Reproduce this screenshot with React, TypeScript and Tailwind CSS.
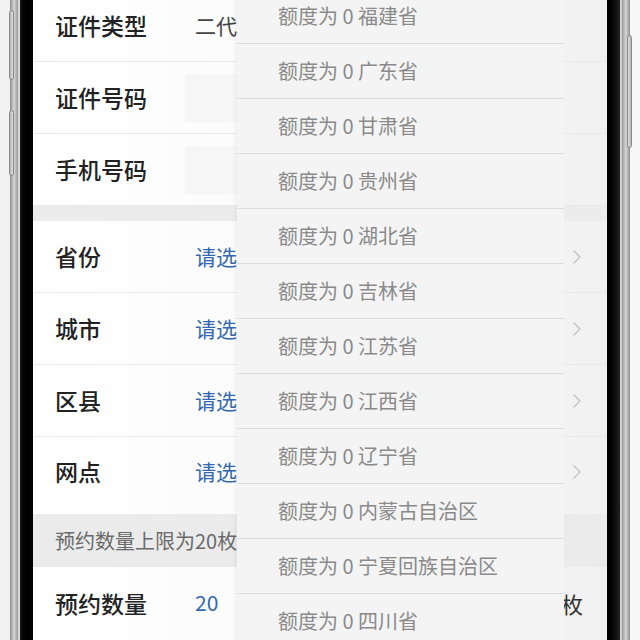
import React from 'react';

const FONT = { fontFamily: '"Noto Sans CJK SC", "Noto Sans", sans-serif' };

const PROVINCES = [
  '福建省',
  '广东省',
  '甘肃省',
  '贵州省',
  '湖北省',
  '吉林省',
  '江苏省',
  '江西省',
  '辽宁省',
  '内蒙古自治区',
  '宁夏回族自治区',
  '四川省',
];

function Chevron() {
  return (
    <svg width="10" height="16" viewBox="0 0 10 16" className="shrink-0">
      <path d="M1.5 1.5 L8 8 L1.5 14.5" fill="none" stroke="#c4c4c4" strokeWidth="1.4" />
    </svg>
  );
}

function Row({ label, children, arrow }: { label: string; children?: React.ReactNode; arrow?: boolean }) {
  return (
    <div className="h-[72px] flex items-center border-b border-[#e9e9e9] pl-[22px] pr-[25px]">
      <span className="w-[140px] text-[23px] font-medium text-[#222]">{label}</span>
      <div className="flex-1 flex items-center">{children}</div>
      {arrow && <Chevron />}
    </div>
  );
}

export default function App() {
  return (
    <div className="w-[640px] h-[640px] overflow-hidden flex bg-white" style={FONT}>
      {/* left phone edge */}
      <div className="w-[33px] h-full flex shrink-0">
        <div className="w-[10px] bg-[#f2f2f2]" />
        <div className="w-[8px] relative bg-gradient-to-r from-[#8d8d8d] via-[#d6d6d6] to-[#9a9a9a]">
          <div className="absolute left-[-1px] top-[10px] w-[5px] h-[70px] rounded-sm bg-gradient-to-r from-[#b5b5b5] to-[#e0e0e0] border border-[#888]" />
          <div className="absolute left-[-1px] top-[110px] w-[5px] h-[66px] rounded-sm bg-gradient-to-r from-[#b5b5b5] to-[#e0e0e0] border border-[#888]" />
        </div>
        <div className="w-[2px] bg-[#d8d8d8]" />
        <div className="flex-1 bg-gradient-to-r from-[#1a1a1a] via-black to-[#050505]" />
      </div>

      {/* screen */}
      <div className="flex-1 h-full relative overflow-hidden bg-gradient-to-r from-white via-[#fafafa] to-[#f1f1f1]">
        <div className="-mt-[10px]">
          <Row label="证件类型">
            <span className="text-[21px] text-[#444]">二代</span>
          </Row>
          <Row label="证件号码">
            <div className="w-[58px] h-[48px] -ml-[10px] bg-[#f6f6f6]" />
          </Row>
          <Row label="手机号码">
            <div className="w-[58px] h-[48px] -ml-[10px] bg-[#f6f6f6]" />
          </Row>
          <div className="h-[15px] bg-[#ececec]" />
          <Row label="省份" arrow>
            <span className="text-[21px] text-[#3567ad]">请选</span>
          </Row>
          <Row label="城市" arrow>
            <span className="text-[21px] text-[#3567ad]">请选</span>
          </Row>
          <Row label="区县" arrow>
            <span className="text-[21px] text-[#3567ad]">请选</span>
          </Row>
          <div className="h-[77px] flex items-center pl-[22px] pr-[25px] pb-[8px]">
            <span className="w-[140px] text-[23px] font-medium text-[#222]">网点</span>
            <div className="flex-1">
              <span className="text-[21px] text-[#3567ad]">请选</span>
            </div>
            <Chevron />
          </div>
          <div className="h-[53px] bg-[#ebebeb] flex items-center pl-[22px]">
            <span className="text-[20px] text-[#6a6a6a] whitespace-nowrap">预约数量上限为20枚</span>
          </div>
          <div className="h-[72px] flex items-center pl-[22px] pr-[24px]">
            <span className="w-[140px] text-[23px] font-medium text-[#222]">预约数量</span>
            <span className="flex-1 text-[21px] text-[#3567ad]">20</span>
            <span className="text-[22px] text-[#333]">枚</span>
          </div>
        </div>

        {/* dropdown list */}
        <div className="absolute left-[204px] top-[-11px] w-[327px] bg-[#f4f4f4] shadow-[-2px_0_4px_rgba(0,0,0,0.05)]">
          {PROVINCES.map(p => (
            <div
              key={p}
              className="h-[55px] flex items-center pl-[41px] border-b border-[#dcdcdc] text-[20px] text-[#8a8a8a]"
            >
              额度为 0 {p}
            </div>
          ))}
        </div>
      </div>

      {/* right phone edge */}
      <div className="w-[33px] h-full flex shrink-0">
        <div className="w-[13px] bg-gradient-to-r from-black via-[#0a0a0a] to-[#222]" />
        <div className="w-[2px] bg-[#d0d0d0]" />
        <div className="w-[8px] relative bg-gradient-to-r from-[#9a9a9a] via-[#d6d6d6] to-[#8d8d8d]">
          <div className="absolute right-[-2px] top-[35px] w-[5px] h-[113px] rounded-sm bg-gradient-to-r from-[#e0e0e0] to-[#b5b5b5] border border-[#888]" />
        </div>
        <div className="flex-1 bg-[#f7f7f7]" />
      </div>
    </div>
  );
}
